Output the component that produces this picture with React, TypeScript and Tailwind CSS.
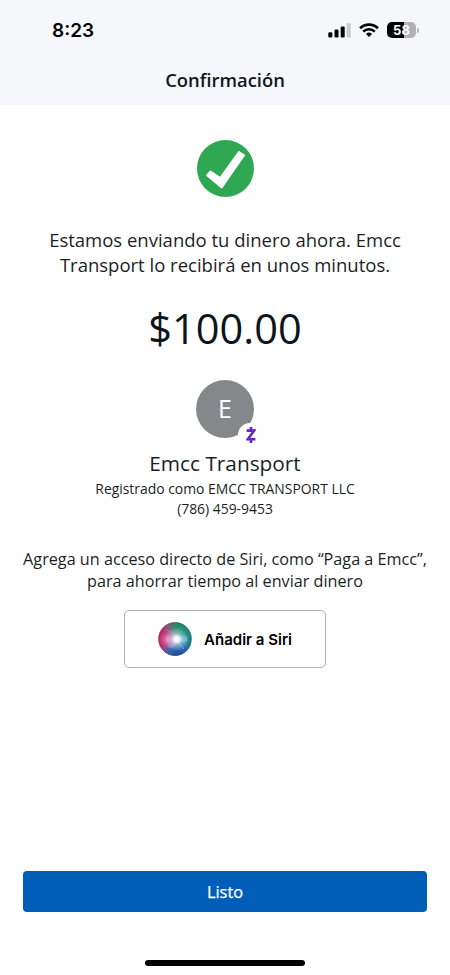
import React from "react";

interface TransferInfo {
  amount: string;
  name: string;
  registeredAs: string;
  phone: string;
}

const transfer: TransferInfo = {
  amount: "$100.00",
  name: "Emcc Transport",
  registeredAs: "EMCC TRANSPORT LLC",
  phone: "(786) 459-9453",
};

function SignalIcon() {
  return (
    <svg className="h-[15px] w-[23px]" viewBox="0 0 23 15">
      <rect x="0.3" y="9.2" width="4" height="5.3" rx="1.2" fill="#000" />
      <rect x="6.5" y="6.5" width="4" height="8" rx="1.2" fill="#000" />
      <rect x="12.7" y="3.4" width="4" height="11.1" rx="1.2" fill="#000" />
      <rect x="18.7" y="0.3" width="4" height="14.2" rx="1.2" fill="#c9cacd" />
    </svg>
  );
}

function WifiIcon() {
  return (
    <svg className="h-[14px] w-[20px]" viewBox="0 0 20 14">
      <path d="M1.1 5.2a12.8 12.8 0 0 1 17.8 0" fill="none" stroke="#000" strokeWidth="2.7" />
      <path d="M4.2 8.6a8.2 8.2 0 0 1 11.6 0" fill="none" stroke="#000" strokeWidth="2.5" />
      <path d="M10 14 7 11a4.4 4.4 0 0 1 6 0Z" fill="#000" />
    </svg>
  );
}

function BatteryIcon() {
  return (
    <div className="flex items-center gap-px">
      <div className="flex h-4 w-[29px] items-center justify-center rounded-[5px] bg-[linear-gradient(90deg,#000_58%,#b1b2b6_58%)]">
        <span className="font-['Inter'] text-[13px] leading-4 font-bold text-white">58</span>
      </div>
      <div className="h-[5px] w-[2px] rounded-r-full bg-[#b1b2b6]" />
    </div>
  );
}

function StatusBar() {
  return (
    <div className="flex h-[60px] items-center justify-between pr-[31px] pl-[52px]">
      <span className="pt-0.5 font-['Inter',sans-serif] text-[19px] font-semibold text-black">8:23</span>
      <div className="flex items-center gap-2">
        <SignalIcon />
        <WifiIcon />
        <BatteryIcon />
      </div>
    </div>
  );
}

function SuccessIcon() {
  return (
    <svg className="size-[57px]" viewBox="0 0 57 57">
      <circle cx="28.5" cy="28.5" r="28.5" fill="#2ea853" />
      <path
        d="M10 35.3 13.5 31.4 23.2 38 42 11.9 47.1 15.2 24.7 47.6Z"
        fill="#fff"
        stroke="#fff"
        strokeWidth="1.8"
        strokeLinejoin="round"
      />
    </svg>
  );
}

function ZelleBadge() {
  return (
    <div className="absolute top-[43px] left-[42px] flex size-6 items-center justify-center rounded-full bg-white pl-px">
      <svg className="h-[18px] w-[10px]" viewBox="0 0 10 18">
        <path
          d="M0.6 4.6h7.6L1.8 13.2h7.6M5 0.9v3.7M5 13.2v3.7"
          fill="none"
          stroke="#6a1fc9"
          strokeWidth="2.6"
        />
      </svg>
    </div>
  );
}

function SiriIcon() {
  return (
    <svg className="size-[34px]" viewBox="0 0 34 34">
      <defs>
        <linearGradient id="siriBase" x1="0" y1="0.45" x2="1" y2="0.55">
          <stop offset="0" stopColor="#cf2066" />
          <stop offset="0.3" stopColor="#b0487f" />
          <stop offset="0.6" stopColor="#2f8c86" />
          <stop offset="1" stopColor="#178a80" />
        </linearGradient>
        <radialGradient id="siriBlue" cx="0.6" cy="1" r="0.55">
          <stop offset="0" stopColor="#1a4c9c" />
          <stop offset="0.5" stopColor="#2563b4" stopOpacity="0.9" />
          <stop offset="1" stopColor="#2868b8" stopOpacity="0" />
        </radialGradient>
        <radialGradient id="siriGreen" cx="0.62" cy="0.1" r="0.45">
          <stop offset="0" stopColor="#1b8f66" />
          <stop offset="1" stopColor="#1b9468" stopOpacity="0" />
        </radialGradient>
        <radialGradient id="siriPink" cx="0.28" cy="0.52" r="0.26">
          <stop offset="0" stopColor="#f08cc6" stopOpacity="0.85" />
          <stop offset="1" stopColor="#e765ab" stopOpacity="0" />
        </radialGradient>
        <radialGradient id="siriGlow" cx="0.55" cy="0.51" r="0.36">
          <stop offset="0" stopColor="#fff" />
          <stop offset="0.2" stopColor="#fff" stopOpacity="0.95" />
          <stop offset="0.5" stopColor="#eef0ff" stopOpacity="0.45" />
          <stop offset="1" stopColor="#fff" stopOpacity="0" />
        </radialGradient>
      </defs>
      <circle cx="17" cy="17" r="16.7" fill="url(#siriBase)" />
      <circle cx="17" cy="17" r="16.7" fill="url(#siriGreen)" />
      <circle cx="17" cy="17" r="16.7" fill="url(#siriBlue)" />
      <circle cx="17" cy="17" r="16.7" fill="url(#siriPink)" />
      <path d="M19 17c4-4 10-4 11-.5S25 23 19 17Z" fill="#4cb8ea" fillOpacity="0.6" />
      <path d="M18 17 9 25c3 3 9 2 10-7Z" fill="#b79bee" fillOpacity="0.35" />
      <path d="m19 18 7 9" stroke="#a9d4f7" strokeOpacity="0.5" />
      <path d="M8 8c4 0 8 4 10 8" fill="none" stroke="#f0b6d5" strokeOpacity="0.35" />
      <circle cx="17" cy="17" r="16.7" fill="url(#siriGlow)" />
      <circle cx="17" cy="17" r="16" fill="none" stroke="#4b3a72" strokeOpacity="0.3" strokeWidth="1.3" />
    </svg>
  );
}

export default function App() {
  return (
    <div className="flex h-[975px] w-[450px] flex-col bg-white font-['Open_Sans',sans-serif] text-[#1b1f24]">
      <header className="h-[105px] bg-[#f5f7fb]">
        <StatusBar />
        <h1 className="text-center text-[18.4px] leading-10 font-[550] text-[#11161b]">Confirmación</h1>
      </header>

      <main className="flex flex-1 flex-col items-center pt-[35px] text-center">
        <SuccessIcon />

        <p className="mt-[30px] text-[18.5px] leading-[25px]">
          Estamos enviando tu dinero ahora. Emcc
          <br />
          Transport lo recibirá en unos minutos.
        </p>

        <p className="mt-[23px] text-[41.5px] leading-[56px] text-[#0d151c]">{transfer.amount}</p>

        <div className="relative mt-[24px] flex size-[58px] items-center justify-center rounded-full bg-[#84888b]">
          <span className="pb-0.5 text-[25px] leading-[56px] text-white">{transfer.name.charAt(0)}</span>
          <ZelleBadge />
        </div>

        <h2 className="mt-[11px] text-[20.8px] leading-7">{transfer.name}</h2>
        <p className="mt-[2px] text-[13.9px] leading-[20px]">Registrado como {transfer.registeredAs}</p>
        <p className="text-[13.9px] leading-[20px]">{transfer.phone}</p>

        <p className="mt-[29px] text-[16.2px] leading-[22px]">
          Agrega un acceso directo de Siri, como “Paga a Emcc”,
          <br />
          para ahorrar tiempo al enviar dinero
        </p>

        <button
          type="button"
          className="mt-[18px] flex h-[58px] w-[202px] items-center justify-center gap-3 rounded-[5px] border border-[#b0b0b0] bg-white"
        >
          <SiriIcon />
          <span className="pt-0.5 font-['Inter',sans-serif] text-[15px] font-semibold text-black">Añadir a Siri</span>
        </button>
      </main>

      <footer className="flex flex-col items-center px-[23px] pb-[9px]">
        <button
          type="button"
          className="h-[41px] w-full rounded-[4px] bg-[#005eb8] pt-0.5 text-[16.4px] font-medium text-white [-webkit-text-stroke:0.25px_white]"
        >
          Listo
        </button>
        <div className="mt-[48px] h-[6px] w-[160px] rounded-full bg-black" />
      </footer>
    </div>
  );
}
